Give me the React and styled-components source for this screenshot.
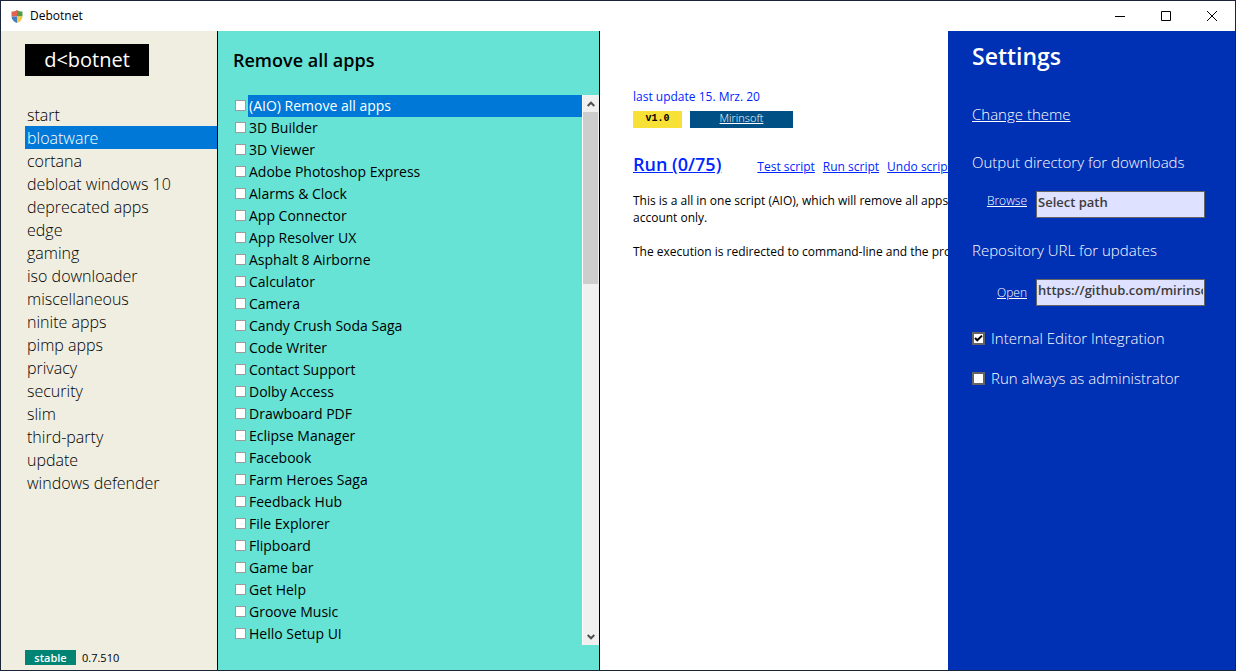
import React, { useState } from "react";
import styled, { createGlobalStyle, css } from "styled-components";

const GlobalStyle = createGlobalStyle`
  *, *::before, *::after { box-sizing: border-box; }
  body {
    margin: 0;
    overflow: hidden;
    font-family: "Open Sans", "Noto Sans", sans-serif;
    font-weight: 300;
    color: #000;
  }
  button, input { font: inherit; }
  h1, h2, p, ul { margin: 0; padding: 0; }
  ul { list-style: none; }
`;

const Window = styled.div`
  display: flex;
  flex-direction: column;
  height: 100vh;
  border: 1px solid #1b2539;
  background: #fff;
`;

const TitleBar = styled.header`
  display: flex;
  align-items: center;
  flex: none;
  height: 30px;
  padding-left: 10px;
  background: #fff;
`;

const Title = styled.span`
  flex: 1;
  margin-left: 7px;
  font-size: 12px;
  font-weight: 400;
  line-height: 16px;
`;

const CaptionButton = styled.button`
  display: flex;
  align-items: center;
  justify-content: center;
  width: 46px;
  height: 30px;
  padding: 0;
  border: 0;
  background: none;
`;

const Body = styled.div`
  position: relative;
  display: flex;
  flex: 1;
  min-height: 0;
`;

const Sidebar = styled.nav`
  display: flex;
  flex-direction: column;
  flex: none;
  width: 217px;
  padding: 13px 0 5px 24px;
  border-right: 1px solid #000;
  background: #f0eee1;
`;

const Logo = styled.div`
  width: 124px;
  height: 32px;
  margin-bottom: 27px;
  background: #000;
  color: #fff;
  font-size: 20px;
  font-weight: 400;
  line-height: 32px;
  text-align: center;
`;

const NavItem = styled.button`
  display: block;
  width: 100%;
  height: 23px;
  padding: 0 2px;
  border: 0;
  background: ${(p) => (p.$active ? "#0078d7" : "transparent")};
  color: ${(p) => (p.$active ? "#fff" : "#000")};
  font-size: 16px;
  line-height: 22px;
  text-align: left;
`;

const Version = styled.div`
  display: flex;
  align-items: center;
  gap: 6px;
  margin-top: auto;
  font-size: 11px;
  font-weight: 400;
  line-height: 15px;
`;

const Channel = styled.span`
  width: 51px;
  background: #008474;
  color: #fff;
  font-weight: 600;
  text-align: center;
`;

const AppsPanel = styled.section`
  display: flex;
  flex-direction: column;
  flex: none;
  width: 382px;
  padding: 17px 0 25px 15px;
  border-right: 1px solid #000;
  background: #66e3d5;
`;

const PanelTitle = styled.h2`
  margin-bottom: 23px;
  font-size: 18px;
  font-weight: 600;
  line-height: 24px;
`;

const ListArea = styled.div`
  display: flex;
  flex: 1;
  min-height: 0;
`;

const AppList = styled.ul`
  flex: 1;
  overflow: hidden;
`;

const AppRow = styled.label`
  display: flex;
  align-items: flex-start;
  height: 22px;
  padding-left: 2px;
  font-size: 14px;
  font-weight: 400;
  line-height: 22px;
`;

const AppName = styled.span`
  flex: 1;
  margin-left: 2px;
  padding-left: 1px;
  ${(p) =>
    p.$active &&
    css`
      background: #0078d7;
      color: #fff;
    `}
`;

const Check = styled.input.attrs({ type: "checkbox" })`
  appearance: none;
  flex: none;
  width: 11px;
  height: 11px;
  margin: 5px 0 0;
  border: 1px solid #a09a9c;
  background: #fff;
`;

const ScrollBar = styled.div`
  display: flex;
  flex-direction: column;
  flex: none;
  width: 17px;
  border-left: 1px solid #fff;
  background: #f0f0f0;
`;

const ScrollButton = styled.button`
  display: flex;
  align-items: center;
  justify-content: center;
  height: 17px;
  padding: 0;
  border: 0;
  background: none;
`;

const Track = styled.div`
  flex: 1;
`;

const Thumb = styled.div`
  width: 15px;
  height: 172px;
  background: #cdcdcd;
`;

const Content = styled.main`
  flex: 1;
  min-width: 0;
  padding: 57px 0 0 33px;
  overflow: hidden;
  white-space: nowrap;
  font-size: 12px;
  font-weight: 400;
  line-height: 17px;
`;

const Updated = styled.p`
  margin-bottom: 6px;
  color: #0026ff;
`;

const Badges = styled.div`
  display: flex;
  gap: 8px;
  margin-bottom: 24px;
`;

const VersionBadge = styled.span`
  width: 49px;
  height: 17px;
  background: #f7e136;
  font-family: "Liberation Mono", monospace;
  font-size: 10px;
  font-weight: 700;
  line-height: 15px;
  text-align: center;
`;

const AuthorBadge = styled.a`
  width: 103px;
  height: 17px;
  background: #005086;
  color: #fff;
  font-size: 11px;
  font-weight: 300;
  line-height: 14px;
  text-align: center;
`;

const Actions = styled.div`
  display: flex;
  align-items: baseline;
  gap: 8px;
  margin-bottom: 13px;
`;

const Action = styled.a`
  color: #0026ff;
  font-size: 12px;
  line-height: 24px;
`;

const RunAction = styled(Action)`
  margin-right: 28px;
  font-size: 18px;
  font-weight: 600;
`;

const Description = styled.p`
  & + & { margin-top: 17px; }
`;

const Settings = styled.aside`
  position: absolute;
  top: 0;
  right: 0;
  bottom: 0;
  width: 287px;
  padding: 9px 30px 0 24px;
  background: #0030b4;
  color: #fff;
  font-size: 15px;
  line-height: 20px;
`;

const SettingsTitle = styled.h1`
  margin-bottom: 32px;
  font-size: 23px;
  font-weight: 600;
  line-height: 32px;
`;

const ThemeLink = styled.a`
  display: block;
  margin-bottom: 28px;
  color: #fff;
`;

const FieldLabel = styled.label`
  display: block;
  margin-bottom: 19px;
`;

const FieldRow = styled.div`
  display: flex;
  align-items: ${(p) => (p.$centered ? "center" : "flex-start")};
  gap: 9px;
  margin-bottom: 22px;
`;

const FieldAction = styled.a`
  width: 55px;
  color: #fff;
  font-size: 12px;
  text-align: right;
`;

const Field = styled.input`
  flex: 1;
  min-width: 0;
  height: 27px;
  padding: 0 1px 6px;
  border: 1px solid #646464;
  border-radius: 0;
  background: #dee1ff;
  color: #3c3c3c;
  font-size: 13px;
  font-weight: 600;
`;

const Option = styled.label`
  display: flex;
  align-items: center;
  gap: 6px;
  margin-bottom: 20px;
`;

const OptionCheck = styled(Check)`
  width: 13px;
  height: 13px;
  margin: 0;
  border: 2px solid #646464;
  &:checked {
    background: #fff
      url("data:image/svg+xml,%3Csvg xmlns='http://www.w3.org/2000/svg' viewBox='0 0 9 9'%3E%3Cpath d='M1 4l2.3 2.3L8 1.6' fill='none' stroke='%23000' stroke-width='2'/%3E%3C/svg%3E")
      center / 9px 9px no-repeat;
  }
`;

const ShieldIcon = () => (
  <svg width="12" height="13" viewBox="0 0 12 13" aria-hidden="true">
    <clipPath id="shield">
      <path d="M6 0C7.5 1.1 9.3 1.5 11.5 1.5V6C11.5 9.5 9.4 11.8 6 13C2.6 11.8.5 9.5.5 6V1.5C2.7 1.5 4.5 1.1 6 0Z" />
    </clipPath>
    <g clipPath="url(#shield)">
      <path d="M0 0h6v6.5H0z" fill="#df6352" />
      <path d="M6 0h6v6.5H6z" fill="#559a43" />
      <path d="M0 6.5h6V13H0z" fill="#467cc4" />
      <path d="M6 6.5h6V13H6z" fill="#f3ca3e" />
    </g>
  </svg>
);

const captionIcons = {
  Minimize: "M0 5.5h10",
  Maximize: "M.5.5h9v9h-9z",
  Close: "M0 0l10 10M10 0L0 10",
};

const CaptionIcon = ({ name }) => (
  <svg width="10" height="10" viewBox="0 0 10 10" fill="none" stroke="#000" aria-hidden="true">
    <path d={captionIcons[name]} />
  </svg>
);

const Chevron = ({ down }) => (
  <svg width="8" height="6" viewBox="0 0 8 6" fill="none" stroke="#505050" strokeWidth="2" aria-hidden="true">
    <path d={down ? "M.7 1L4 4.3 7.3 1" : "M.7 5L4 1.7 7.3 5"} />
  </svg>
);

const categories = [
  "start", "bloatware", "cortana", "debloat windows 10", "deprecated apps",
  "edge", "gaming", "iso downloader", "miscellaneous", "ninite apps",
  "pimp apps", "privacy", "security", "slim", "third-party", "update",
  "windows defender",
];

const apps = [
  "(AIO) Remove all apps", "3D Builder", "3D Viewer", "Adobe Photoshop Express",
  "Alarms & Clock", "App Connector", "App Resolver UX", "Asphalt 8 Airborne",
  "Calculator", "Camera", "Candy Crush Soda Saga", "Code Writer",
  "Contact Support", "Dolby Access", "Drawboard PDF", "Eclipse Manager",
  "Facebook", "Farm Heroes Saga", "Feedback Hub", "File Explorer",
  "Flipboard", "Game bar", "Get Help", "Groove Music", "Hello Setup UI",
];

export default function App() {
  const [category, setCategory] = useState("bloatware");

  return (
    <>
      <GlobalStyle />
      <Window>
        <TitleBar>
          <ShieldIcon />
          <Title>Debotnet</Title>
          {Object.keys(captionIcons).map((name) => (
            <CaptionButton key={name} aria-label={name}>
              <CaptionIcon name={name} />
            </CaptionButton>
          ))}
        </TitleBar>
        <Body>
          <Sidebar>
            <Logo>d&lt;botnet</Logo>
            {categories.map((name) => (
              <NavItem key={name} $active={name === category} onClick={() => setCategory(name)}>
                {name}
              </NavItem>
            ))}
            <Version>
              <Channel>stable</Channel>
              <span>0.7.510</span>
            </Version>
          </Sidebar>

          <AppsPanel>
            <PanelTitle>Remove all apps</PanelTitle>
            <ListArea>
              <AppList>
                {apps.map((name, i) => (
                  <li key={name}>
                    <AppRow>
                      <Check />
                      <AppName $active={i === 0}>{name}</AppName>
                    </AppRow>
                  </li>
                ))}
              </AppList>
              <ScrollBar>
                <ScrollButton aria-label="Scroll up"><Chevron /></ScrollButton>
                <Track><Thumb /></Track>
                <ScrollButton aria-label="Scroll down"><Chevron down /></ScrollButton>
              </ScrollBar>
            </ListArea>
          </AppsPanel>

          <Content>
            <Updated>last update 15. Mrz. 20</Updated>
            <Badges>
              <VersionBadge>v1.0</VersionBadge>
              <AuthorBadge href="#">Mirinsoft</AuthorBadge>
            </Badges>
            <Actions>
              <RunAction href="#">Run (0/75)</RunAction>
              <Action href="#">Test script</Action>
              <Action href="#">Run script</Action>
              <Action href="#">Undo script</Action>
            </Actions>
            <Description>
              This is a all in one script (AIO), which will remove all apps
              <br />
              account only.
            </Description>
            <Description>The execution is redirected to command-line and the process</Description>
          </Content>

          <Settings>
            <SettingsTitle>Settings</SettingsTitle>
            <ThemeLink href="#">Change theme</ThemeLink>
            <FieldLabel htmlFor="output">Output directory for downloads</FieldLabel>
            <FieldRow>
              <FieldAction href="#">Browse</FieldAction>
              <Field id="output" defaultValue="Select path" />
            </FieldRow>
            <FieldLabel htmlFor="repository">Repository URL for updates</FieldLabel>
            <FieldRow $centered>
              <FieldAction href="#">Open</FieldAction>
              <Field id="repository" defaultValue="https://github.com/mirinsoft/debotnet" />
            </FieldRow>
            <Option>
              <OptionCheck defaultChecked />
              Internal Editor Integration
            </Option>
            <Option>
              <OptionCheck />
              Run always as administrator
            </Option>
          </Settings>
        </Body>
      </Window>
    </>
  );
}
